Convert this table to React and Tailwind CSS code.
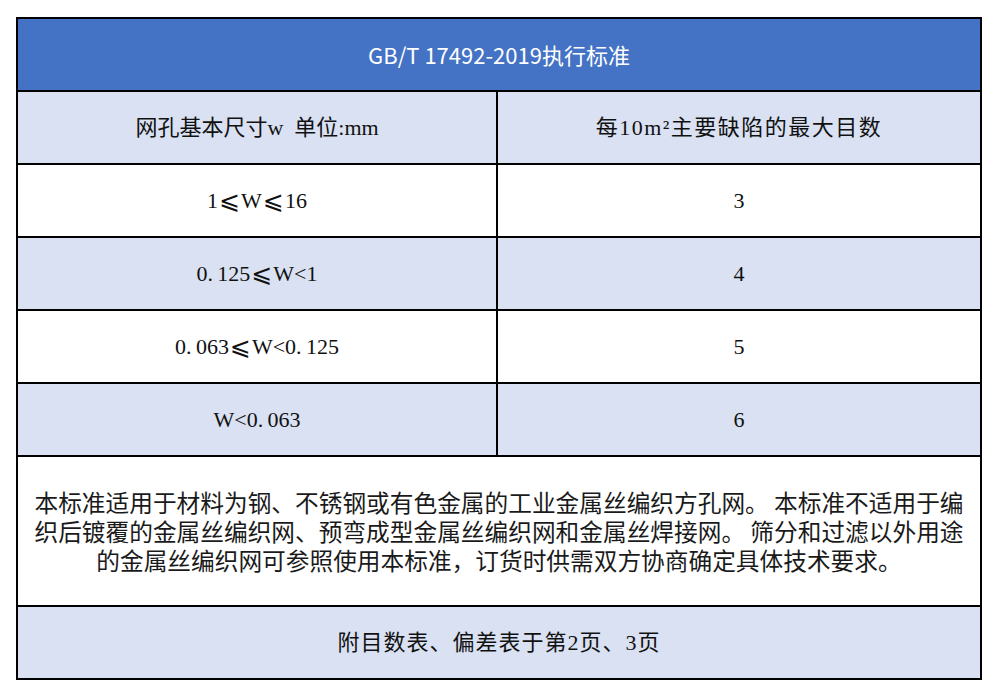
import React from "react";

const serif = "font-['Liberation_Serif','Noto_Sans_CJK_SC',serif]";
const sans = "font-['Noto_Sans_CJK_SC','Open_Sans',sans-serif]";

const rows = [
  { size: ["1", "⩽", "W", "⩽", "16"], count: "3", shade: false },
  { size: ["0.125", "⩽", "W<1"], count: "4", shade: true },
  { size: ["0.063", "⩽", "W<0.125"], count: "5", shade: false },
  { size: ["W<0.063"], count: "6", shade: true },
];

// SimSun-like look: the sign takes a full-width cell, the period a half cell
const SizeText = ({ parts }) => (
  <span className="inline-flex items-center">
    {parts.map((p, i) =>
      p === "⩽" ? (
        <span
          key={i}
          className="inline-block w-[23px] text-center text-[25px] leading-none font-['DejaVu_Sans',sans-serif]"
        >
          {p}
        </span>
      ) : (
        <span key={i}>{p.replace(".", ".\u2009")}</span>
      )
    )}
  </span>
);

const App = () => {
  return (
    <div className="w-[1000px] h-[698px] bg-white pl-[16px] pt-[17px]">
      <div className="w-[966px] border-2 border-black flex flex-col text-[#111]">
        {/* Title */}
        <div
          className={`h-[71px] bg-[#4472c4] flex items-center justify-center text-white text-[22px] ${sans}`}
        >
          GB/T 17492-2019执行标准
        </div>

        {/* Column heads */}
        <div className="h-[73px] border-t-2 border-black flex bg-[#d9e1f2]">
          <div
            className={`w-[480px] border-r-2 border-black flex items-center justify-center text-[22px] whitespace-pre ${serif}`}
          >
            {"网孔基本尺寸w  单位:mm"}
          </div>
          <div
            className={`flex-1 flex items-center justify-center text-[22px] tracking-[1.5px] ${serif}`}
          >
            每10m²主要缺陷的最大目数
          </div>
        </div>

        {/* Data rows */}
        {rows.map((r) => (
          <div
            key={r.count}
            className={`h-[73px] border-t-2 border-black flex ${
              r.shade ? "bg-[#d9e1f2]" : "bg-white"
            }`}
          >
            <div
              className={`w-[480px] border-r-2 border-black flex items-center justify-center text-[22px] ${serif}`}
            >
              <SizeText parts={r.size} />
            </div>
            <div
              className={`flex-1 flex items-center justify-center text-[22px] ${serif}`}
            >
              {r.count}
            </div>
          </div>
        ))}

        {/* Note */}
        <div
          className={`h-[150px] border-t-2 border-black bg-white flex items-center justify-center text-center text-[23.7px] leading-[29px] text-[#1a1a1a] ${sans}`}
        >
          <p>
            本标准适用于材料为钢、不锈钢或有色金属的工业金属丝编织方孔网。 本标准不适用于编
            <br />
            织后镀覆的金属丝编织网、预弯成型金属丝编织网和金属丝焊接网。 筛分和过滤以外用途
            <br />
            的金属丝编织网可参照使用本标准，订货时供需双方协商确定具体技术要求。
          </p>
        </div>

        {/* Footer */}
        <div
          className={`h-[73px] border-t-2 border-black bg-[#d9e1f2] flex items-center justify-center text-[22px] tracking-[1px] ${serif}`}
        >
          附目数表、偏差表于第2页、3页
        </div>
      </div>
    </div>
  );
};

export default App;
